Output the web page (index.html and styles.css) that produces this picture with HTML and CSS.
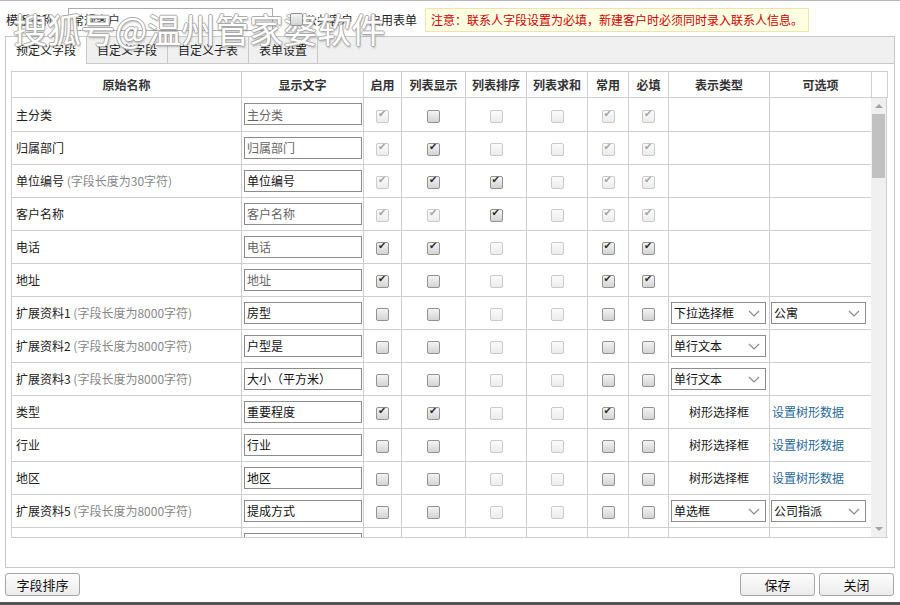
FILE: index.html
```html
<!DOCTYPE html>
<html lang="zh-CN">
<head>
  <meta charset="UTF-8" />
  <title>客户表单设置</title>
  <link rel="stylesheet" href="styles.css">
</head>
<body>
  <div class="page">
    <div class="watermark">搜狐号@温州管家婆软件</div>

    <div class="toolbar">
      <span>模板名称：</span>
      <input type="text" class="tpl-name" value="常规客户" />
      <input type="checkbox" class="tpl-check" />
      <span>公共客户</span>
      <span class="tpl-label">启用表单</span>
      <div class="notice">注意：联系人字段设置为必填，新建客户时必须同时录入联系人信息。</div>
    </div>

    <div class="tabs-box">
      <div class="tab-strip">
        <a href="#" class="tab active">预定义字段</a>
        <a href="#" class="tab">自定义字段</a>
        <a href="#" class="tab">自定义子表</a>
        <a href="#" class="tab">表单设置</a>
      </div>

      <div class="panel">
        <table class="grid grid-head">
          <colgroup>
            <col class="c-name"><col class="c-text"><col class="c-on"><col class="c-list">
            <col class="c-sort"><col class="c-sum"><col class="c-use"><col class="c-req">
            <col class="c-type"><col class="c-opt"><col class="c-sb">
          </colgroup>
          <tr>
            <th>原始名称</th>
            <th>显示文字</th>
            <th>启用</th>
            <th>列表显示</th>
            <th>列表排序</th>
            <th>列表求和</th>
            <th>常用</th>
            <th>必填</th>
            <th>表示类型</th>
            <th>可选项</th>
            <th></th>
          </tr>
        </table>

        <div class="grid-body">
          <div class="grid-clip">
            <table class="grid">
              <colgroup>
                <col class="c-name"><col class="c-text"><col class="c-on"><col class="c-list">
                <col class="c-sort"><col class="c-sum"><col class="c-use"><col class="c-req">
                <col class="c-type"><col class="c-opt">
              </colgroup>
              <tbody id="fieldRows"></tbody>
            </table>
          </div>
          <div class="vscroll">
            <div class="sb-btn"><span class="arrow-up"></span></div>
            <div class="sb-track">
              <div class="sb-thumb"></div>
            </div>
            <div class="sb-btn"><span class="arrow-down"></span></div>
          </div>
        </div>
      </div>
    </div>

    <div class="footer">
      <button>字段排序</button>
      <div class="footer-right">
        <button>保存</button>
        <button>关闭</button>
      </div>
    </div>
  </div>

  <script>
    // flags: v = checked, o = unchecked, V = checked + disabled, x = disabled
    const rows = [
      ['主分类', '', '主分类', true, 'VoxxVV'],
      ['归属部门', '', '归属部门', true, 'VvxxVV'],
      ['单位编号', '(字段长度为30字符)', '单位编号', false, 'VvvxVV'],
      ['客户名称', '', '客户名称', true, 'VVvxVV'],
      ['电话', '', '电话', true, 'vvxxvv'],
      ['地址', '', '地址', true, 'voxxvv'],
      ['扩展资料1', '(字段长度为8000字符)', '房型', false, 'ooxxoo', '下拉选择框', '公寓'],
      ['扩展资料2', '(字段长度为8000字符)', '户型是', false, 'ooxxoo', '单行文本'],
      ['扩展资料3', '(字段长度为8000字符)', '大小（平方米）', false, 'ooxxoo', '单行文本'],
      ['类型', '', '重要程度', false, 'vvxxvo', 'tree'],
      ['行业', '', '行业', false, 'ooxxoo', 'tree'],
      ['地区', '', '地区', false, 'ooxxoo', 'tree'],
      ['扩展资料5', '(字段长度为8000字符)', '提成方式', false, 'ooxxoo', '单选框', '公司指派'],
      ['客户来源', '', '客户来源', false, 'ooxxoo', 'tree']
    ];

    function box(f) {
      const checked = (f === 'v' || f === 'V') ? ' checked' : '';
      const disabled = (f === 'V' || f === 'x') ? ' disabled' : '';
      return `<td class="center"><input type="checkbox"${checked}${disabled} /></td>`;
    }

    function sel(text) {
      return `<span class="sel"><select><option>${text}</option></select>` +
        `<svg class="chev" width="12" height="7" viewBox="0 0 12 7"><path d="M1 1l5 5 5-5" /></svg></span>`;
    }

    const body = document.getElementById('fieldRows');
    rows.forEach(([name, hint, text, ro, flags, type, opt]) => {
      let html = `<td class="name">${name}${hint ? ' <span class="hint">' + hint + '</span>' : ''}</td>`;
      html += `<td class="text"><input type="text" class="txt${ro ? ' ro' : ''}" value="${text}" /></td>`;
      html += flags.split('').map(box).join('');
      if (type === 'tree') {
        html += '<td class="center">树形选择框</td><td class="opt"><a href="#" class="link">设置树形数据</a></td>';
      } else {
        html += `<td class="type">${type ? sel(type) : ''}</td>`;
        html += `<td class="opt">${opt ? sel(opt) : ''}</td>`;
      }
      const tr = document.createElement('tr');
      tr.innerHTML = html;
      body.appendChild(tr);
    });
  </script>
</body>
</html>
```

FILE: styles.css
```css
body {
  margin: 0;
  font-family: "Noto Sans CJK SC", "Liberation Sans", sans-serif;
  font-size: 12px;
  color: #222;
  background: #fff;
}
.page {
  position: relative;
  height: 605px;
  box-sizing: border-box;
  border-top: 1px solid #b8b8b8;
  border-bottom: 3px solid #555;
}
.watermark {
  position: absolute;
  left: 13px;
  top: 3px;
  font-size: 34px;
  color: #fff;
  text-shadow: 1px 0 0 #aaa, -1px 0 0 #aaa, 0 1px 0 #aaa, 0 -1px 0 #aaa, 1px 2px 2px rgba(0,0,0,0.25);
  pointer-events: none;
  white-space: nowrap;
}
.toolbar {
  display: flex;
  align-items: center;
  height: 23px;
  margin: 7px 0 0 6px;
}
.tpl-name {
  width: 205px;
  height: 23px;
  box-sizing: border-box;
  margin: 0 0 0 2px;
  border: 1px solid #abadb3;
  padding: 0 3px;
  font: inherit;
  color: #333;
}
.tpl-check {
  margin: 0 2px 0 17px !important;
}
.tpl-label {
  margin-left: 16px;
}
.notice {
  margin-left: 8px;
  height: 22px;
  line-height: 22px;
  padding: 0 5px;
  border: 1px solid #f1e3b0;
  background: #ffffe1;
  color: #d40000;
}
.tabs-box {
  margin: 5px 5px 0 5px;
  border: 1px solid #c8c8c8;
}
.tab-strip {
  display: flex;
  height: 26px;
  background: #f0f0f0;
  border-bottom: 1px solid #c8c8c8;
}
.tab {
  padding: 0 10px;
  line-height: 26px;
  color: #222;
  text-decoration: none;
  border-right: 1px solid #c8c8c8;
}
.tab.active {
  background: #fff;
  height: 27px;
}
.panel {
  padding: 7px 6px 29px 5px;
  background: #fff;
}
.grid {
  table-layout: fixed;
  border-collapse: collapse;
  width: 860px;
}
.grid-head {
  width: 876px;
}
.grid th, .grid td {
  border: 1px solid #cfcfcf;
  padding: 0;
  white-space: nowrap;
  overflow: hidden;
}
.grid th {
  font-weight: bold;
  color: #333;
  text-align: center;
}
.grid tr {
  height: 33px;
}
.grid-head tr {
  height: 26px;
}
.c-name { width: 230px; }
.c-text { width: 122px; }
.c-on { width: 38px; }
.c-list { width: 64px; }
.c-sort { width: 61px; }
.c-sum { width: 61px; }
.c-use { width: 41px; }
.c-req { width: 40px; }
.c-type { width: 101px; }
.c-opt { width: 102px; }
.c-sb { width: 16px; }
.grid-body {
  display: flex;
  height: 440px;
  border-bottom: 1px solid #cfcfcf;
  box-sizing: border-box;
}
.grid-clip {
  width: 860px;
  overflow: hidden;
}
.grid-clip .grid tr:first-child td {
  border-top: none;
}
.name {
  padding-left: 4px !important;
}
.hint {
  color: #888;
}
.text {
  padding-left: 2px !important;
}
.txt {
  width: 118px;
  height: 22px;
  box-sizing: border-box;
  margin: 0;
  border: 1px solid #8c8c8c;
  padding: 0 2px;
  font: inherit;
  color: #111;
  vertical-align: middle;
}
.txt.ro {
  color: #666;
}
.center {
  text-align: center;
}
.type {
  padding-left: 2px !important;
}
.opt {
  padding-left: 1px !important;
}
.link {
  color: #1f6b9c;
  text-decoration: none;
  padding-left: 1px;
}
.sel {
  position: relative;
  display: inline-block;
  vertical-align: middle;
}
.sel select {
  appearance: none;
  -webkit-appearance: none;
  width: 95px;
  height: 22px;
  margin: 0;
  border: 1px solid #8c8c8c;
  border-radius: 0;
  padding: 0 2px;
  background: #fff;
  font: inherit;
  color: #111;
}
.chev {
  position: absolute;
  right: 6px;
  top: 8px;
  fill: none;
  stroke: #8a8a8a;
  stroke-width: 1.2;
}
input[type=checkbox] {
  appearance: none;
  -webkit-appearance: none;
  position: relative;
  width: 13px;
  height: 13px;
  margin: 0;
  vertical-align: middle;
  border: 1px solid #929292;
  border-radius: 2px;
  background: linear-gradient(#f3f3f3, #d4d4d4);
}
input[type=checkbox]:disabled {
  border-color: #cacaca;
  background: linear-gradient(#fbfbfb, #ececec);
}
input[type=checkbox]:checked::after {
  content: "\2714";
  position: absolute;
  left: 1px;
  top: -3px;
  font-family: "DejaVu Sans", sans-serif;
  font-size: 10px;
  color: #2a2a2a;
}
input[type=checkbox]:checked:disabled::after {
  color: #a3a3a3;
}
.vscroll {
  display: flex;
  flex-direction: column;
  width: 16px;
  background: #f0f0f0;
  border-right: 1px solid #cfcfcf;
  box-sizing: border-box;
}
.sb-btn {
  height: 16px;
  display: flex;
  align-items: center;
  justify-content: center;
}
.arrow-up {
  border-left: 4px solid transparent;
  border-right: 4px solid transparent;
  border-bottom: 4px solid #a3a3a3;
}
.arrow-down {
  border-left: 4px solid transparent;
  border-right: 4px solid transparent;
  border-top: 4px solid #a3a3a3;
}
.sb-track {
  flex: 1;
  padding: 0 1px;
}
.sb-thumb {
  height: 64px;
  background: #c1c1c1;
}
.footer {
  display: flex;
  justify-content: space-between;
  margin-top: 5px;
  padding: 0 6px 0 5px;
}
.footer-right {
  display: flex;
  gap: 4px;
}
button {
  width: 75px;
  height: 23px;
  padding: 0;
  border: 1px solid #a6a6a6;
  border-radius: 3px;
  background: linear-gradient(#fdfdfd, #ececec);
  font: inherit;
  font-size: 13px;
  color: #111;
  cursor: pointer;
}
```
